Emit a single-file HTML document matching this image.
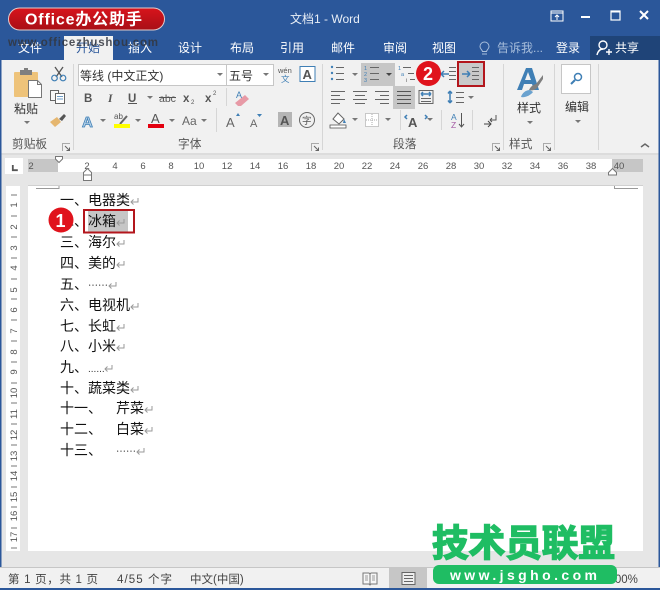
<!DOCTYPE html>
<html><head><meta charset="utf-8"><style>
html,body{margin:0;padding:0;background:#e6e6e6;width:660px;height:590px;overflow:hidden}
svg{display:block}
text{font-family:"Liberation Sans","Noto Sans CJK SC",sans-serif}
.t{font-size:12px;fill:#fff}
.g{font-size:11.7px;fill:#555}
.d{font-size:14px;fill:#111}
.cj{font-size:10px;fill:#444;font-family:"Noto Sans CJK SC",sans-serif}
.n{font-size:9.5px;fill:#555}
.ret{stroke:#999;stroke-width:1;fill:none}
.ic{stroke:#666;stroke-width:1;fill:none}
.bl{stroke:#3f7fb5;stroke-width:1.5;fill:none}
.sep{stroke:#d6d6d6;stroke-width:1}
</style></head><body>
<svg width="660" height="590" viewBox="0 0 660 590" xmlns="http://www.w3.org/2000/svg">
<defs>
<g id="rt"><path class="ret" d="M8 -7V-3H1M3.500 -5.500L1 -3L3.500 -0.500"/></g>
<g id="launch"><path d="M0.500 8V0.500H8" fill="none" stroke="#aaa"/><path d="M3 3L7.500 7.500M7.500 4.500V7.500H4.500" stroke="#666" fill="none"/></g>
<g id="ar"><path d="M0 0H6L3 3Z" fill="#777"/></g>
<linearGradient id="lg" x1="0" y1="0" x2="0" y2="1"><stop offset="0" stop-color="#d8141c"/><stop offset="1" stop-color="#a80f16"/></linearGradient>
</defs>
<!-- title -->
<rect width="660" height="60" fill="#2b579a"/>
<rect x="64" y="36" width="49" height="24" fill="#f1f1f1"/>
<rect x="590" y="36" width="70" height="24" fill="#1f4478"/>
<text x="290" y="23" font-size="12" fill="#e8eef6">文档1 - Word</text>
<rect x="8.500" y="8" width="156" height="22" rx="11" fill="url(#lg)" stroke="#e2cccc" stroke-width="1"/>
<text x="25" y="24.500" font-size="16" font-weight="bold" fill="#fff" textLength="117">Office办公助手</text>
<text x="18" y="52" class="t">文件</text>
<text x="128" y="52" class="t">插入</text>
<text x="178" y="52" class="t">设计</text>
<text x="230" y="52" class="t">布局</text>
<text x="280" y="52" class="t">引用</text>
<text x="331" y="52" class="t">邮件</text>
<text x="383" y="52" class="t">审阅</text>
<text x="432" y="52" class="t">视图</text>
<text x="497" y="52" class="t" style="fill:#a9bfdc">告诉我...</text>
<text x="556" y="52" class="t">登录</text>
<text x="615" y="52" class="t">共享</text>
<text x="76" y="52" font-size="12" fill="#2b579a">开始</text>
<text x="8" y="46" font-size="11.500" font-weight="bold" fill="#33373f" opacity=".85" textLength="150">www.officezhushou.com</text>
<!-- lightbulb -->
<path d="M482 54h5M482.500 51.500c-.5-2-2.500-2.500-2.500-5a4.500 4.500 0 0 1 9 0c0 2.500-2 3-2.500 5z" stroke="#a9bfdc" fill="none"/>
<!-- user -->
<circle cx="603" cy="45" r="4" fill="none" stroke="#fff" stroke-width="1.400"/><path d="M597 55c1-4 3-6 6-6M606 52h6M609 49v6" stroke="#fff" stroke-width="1.400" fill="none"/>
<!-- win controls -->
<rect x="551" y="11" width="12" height="10" fill="none" stroke="#fff"/><path d="M551 13h12M557 20v-5M555 17l2-2 2 2" stroke="#fff" fill="none"/>
<rect x="581" y="16" width="9" height="2" fill="#fff"/>
<rect x="611" y="11" width="9" height="9" fill="none" stroke="#fff" stroke-width="1.200"/><rect x="611" y="10.500" width="9" height="2" fill="#fff"/>
<path d="M640 11l8 8M648 11l-8 8" stroke="#fff" stroke-width="2"/>
<!-- ribbon -->
<rect x="0" y="60" width="660" height="93" fill="#f1f1f1"/>
<rect x="0" y="153" width="660" height="2" fill="#dcdcdc"/>
<path class="sep" d="M73.500 64V150M322.500 64V150M503.500 64V150M554.500 64V150M598.500 64V150M216.500 108V132M226.500 88V106M400.500 110V130M441.500 110V130M472.500 110V130"/>
<!-- paste -->
<rect x="14" y="72" width="24" height="25" rx="1" fill="#eec37a"/>
<rect x="20" y="70" width="12" height="5" fill="#7f7f7f"/><rect x="24" y="68" width="4" height="3" fill="#7f7f7f"/>
<path d="M28.500 80.500h9l4 4v13h-13z" fill="#fff" stroke="#777"/><path d="M37.500 80.500v4h4" fill="none" stroke="#777"/>
<text x="14" y="113" font-size="12" fill="#333">粘贴</text>
<use href="#ar" x="24" y="121"/>
<path d="M55 67l7 10M63 67l-7 10" stroke="#555" stroke-width="1.300"/><circle cx="54.500" cy="78" r="2.800" fill="none" stroke="#3f7fb5" stroke-width="1.200"/><circle cx="63" cy="78" r="2.800" fill="none" stroke="#3f7fb5" stroke-width="1.200"/>
<path d="M50.500 90.500h8v10h-8z" fill="#f8f8f8" stroke="#666"/><path d="M55.500 93.500h9v10h-9z" fill="#fff" stroke="#666"/><path d="M57 96.500h6M57 99h6" stroke="#3f7fb5" stroke-width=".8"/>
<path d="M50 122l7-5 4 5-6 5z" fill="#e5b66f"/><path d="M59 119l5-5 2 2-4 5z" fill="#555"/>
<text x="12" y="148" class="g">剪贴板</text>
<use href="#launch" x="62" y="143"/>
<!-- font -->
<rect x="78.500" y="64.500" width="148" height="21" fill="#fff" stroke="#c6c6c6"/>
<rect x="226.500" y="64.500" width="47" height="21" fill="#fff" stroke="#c6c6c6"/>
<text x="80" y="80" font-size="12" fill="#333">等线 (中文正文)</text>
<text x="229" y="80" font-size="12" fill="#333">五号</text>
<use href="#ar" x="217" y="73"/><use href="#ar" x="263" y="73"/>
<text x="278" y="73" font-size="7.500" fill="#555">wén</text><text x="281" y="82" font-size="8.500" fill="#3f7fb5">文</text>
<rect x="300" y="66.500" width="15" height="15" fill="#fff" stroke="#3f7fb5"/><text x="302.500" y="79" font-size="13" font-weight="bold" fill="#555">A</text>
<text x="84" y="102" font-size="11.500" font-weight="bold" fill="#555">B</text>
<text x="108" y="102" font-size="11.500" font-style="italic" style="font-family:'Liberation Serif',serif" fill="#555" font-weight="bold">I</text>
<text x="128" y="102" font-size="11.500" font-weight="bold" fill="#555">U</text><rect x="128" y="103" width="9" height="1" fill="#555"/>
<use href="#ar" x="147" y="96"/>
<text x="159" y="102" font-size="10.500" fill="#555">abc</text><rect x="159" y="97" width="17" height="1" fill="#555"/>
<text x="183" y="102" font-size="11.500" font-weight="bold" fill="#555">x</text><text x="191" y="104" font-size="6" fill="#555">2</text>
<text x="205" y="102" font-size="11.500" font-weight="bold" fill="#555">x</text><text x="213" y="95" font-size="6" fill="#555">2</text>
<path d="M235 103l10-8 4 4-8 7h-3z" fill="#e79aa6"/><text x="236" y="98" font-size="9" fill="#3f7fb5">A</text>
<text x="82" y="127" font-size="15" font-weight="bold" fill="#b7d3ea" stroke="#3f7fb5" stroke-width=".8">A</text>
<use href="#ar" x="100" y="119"/>
<text x="114" y="119" font-size="8" fill="#555">ab</text><path d="M120 124l7-8" stroke="#666" stroke-width="2"/><rect x="114" y="124" width="16" height="4" fill="#ffff00"/>
<use href="#ar" x="135" y="119"/>
<text x="151" y="123" font-size="13" fill="#555">A</text><rect x="148" y="124" width="16" height="4" fill="#e3000f"/>
<use href="#ar" x="169" y="119"/>
<text x="182" y="125" font-size="12" fill="#666">Aa</text>
<use href="#ar" x="201" y="119"/>
<text x="226" y="127" font-size="13" fill="#666">A</text><path d="M236 116h4l-2-3z" fill="#3f7fb5"/>
<text x="250" y="127" font-size="11" fill="#666">A</text><path d="M257 114h5l-2.500 3z" fill="#3f7fb5"/>
<rect x="278" y="112" width="14" height="15" fill="#b5b5b5"/><text x="280" y="125" font-size="13" font-weight="bold" fill="#555">A</text>
<circle cx="307" cy="120" r="7.500" fill="none" stroke="#666"/><text x="302" y="124" font-size="9.500" fill="#555">字</text>
<text x="178" y="148" class="g">字体</text>
<use href="#launch" x="311" y="143"/>
<!-- paragraph -->
<g fill="#3f7fb5"><circle cx="332" cy="67" r="1.200"/><circle cx="332" cy="73" r="1.200"/><circle cx="332" cy="79" r="1.200"/></g>
<path d="M336 67.500h8M336 73.500h8M336 79.500h8" class="ic"/><use href="#ar" x="352" y="73"/>
<rect x="361" y="63" width="34" height="23" fill="#c6c6c6"/>
<text x="364" y="70" font-size="5.500" fill="#3f7fb5">1</text><text x="364" y="76" font-size="5.500" fill="#3f7fb5">2</text><text x="364" y="82" font-size="5.500" fill="#3f7fb5">3</text>
<path d="M370 67.500h9M370 73.500h9M370 79.500h9" class="ic"/><path d="M386 73h6l-3 3z" fill="#444"/>
<text x="398" y="70" font-size="5.500" fill="#3f7fb5">1</text><text x="401" y="76" font-size="5.500" fill="#3f7fb5">a</text><text x="406" y="82" font-size="5.500" fill="#555">i</text>
<path d="M403 67.500h8M408 73.500h6M410 79.500h5" class="ic"/>
<path d="M441 74h8M441 74l3-3M441 74l3 3" class="bl"/><path d="M449 67.500h7M449 71.500h7M449 75.500h7M449 79.500h7" class="ic"/>
<rect x="458" y="62" width="26" height="24" fill="#c9c9c9" stroke="#b3161c" stroke-width="2"/>
<path d="M462 74h8M470 74l-3-3M470 74l-3 3" class="bl"/><path d="M472 67.500h7M472 71.500h7M472 75.500h7M472 79.500h7" class="ic"/>
<circle cx="428.500" cy="73.500" r="12.500" fill="#e0131c"/><text x="423" y="80" font-size="18" font-weight="bold" fill="#fff">2</text>
<path d="M331 91.500h14M331 95.500h9M331 99.500h14M331 103.500h9" class="ic"/>
<path d="M353 91.500h14M355 95.500h10M353 99.500h14M355 103.500h10" class="ic"/>
<path d="M375 91.500h14M380 95.500h9M375 99.500h14M380 103.500h9" class="ic"/>
<rect x="393" y="86" width="22" height="23" fill="#c6c6c6"/>
<path d="M397 91.500h14M397 95.500h14M397 99.500h14M397 103.500h14" stroke="#555" fill="none"/>
<path d="M419 90.500h14M419 103.500h14M419 90v14M433 90v14" class="ic"/><path d="M421 94h10M421 94l2-2M421 94l2 2M431 94l-2-2M431 94l-2 2" class="bl"/><path d="M421 98.500h10M421 101.500h10" class="ic"/>
<path d="M450 91v12M450 91l-2 2.500M450 91l2 2.500M450 103l-2-2.500M450 103l2-2.500" class="bl"/><path d="M456 92.500h8M456 97.500h8M456 102.500h8" class="ic"/><use href="#ar" x="468" y="96"/>
<path d="M333 119l5-6 6 6-5 5z" fill="#fff" stroke="#666"/><path d="M344 119l2 4h-3z" fill="#3f7fb5"/><rect x="330" y="125" width="16" height="3" fill="#fff" stroke="#555" stroke-width=".8"/>
<use href="#ar" x="352" y="118"/>
<rect x="365.500" y="113.500" width="13" height="13" fill="#fff" stroke="#999" stroke-dasharray="1 1"/><path d="M372 114v12M366 120h12" stroke="#aaa" stroke-dasharray="1 1"/>
<use href="#ar" x="385" y="118"/>
<text x="408" y="127" font-size="13" font-weight="bold" fill="#555">A</text><path d="M407 117l-2 2 2 2M425 117l2 2-2 2" class="bl" transform="translate(0,-2)"/>
<use href="#ar" x="427" y="118"/>
<text x="451" y="120" font-size="8.500" fill="#3f7fb5">A</text><text x="451" y="128" font-size="8.500" fill="#a55ca5">Z</text><path d="M461.500 113v14M459 124l2.500 3 2.500-3" stroke="#555" fill="none"/>
<path d="M490 120h6v-5M490 120l2-2M490 120l2 2" stroke="#555" fill="none"/><path d="M484 124h7M488 121l3 3-3 3" stroke="#444" fill="none"/>
<text x="393" y="148" class="g">段落</text>
<use href="#launch" x="492" y="143"/>
<!-- styles -->
<path d="M517 90l9-22h6l7 22h-5l-2-6h-8l-2 6z" fill="#3f7fb5"/><path d="M525 80h6l-3-8z" fill="#f1f1f1"/>
<path d="M529 90c2-4 4-5 7-6l7-9v4l-6 9c-2 2-5 3-8 2z" fill="#7f7f7f"/><path d="M521 97c1-4 5-7 9-7l3 2c-2 3-8 6-12 5z" fill="#6aa2cf"/>
<text x="517" y="112" font-size="12" fill="#333">样式</text>
<use href="#ar" x="527" y="121"/>
<text x="509" y="148" class="g">样式</text>
<use href="#launch" x="543" y="143"/>
<!-- edit -->
<rect x="561.500" y="64.500" width="29" height="29" fill="#fff" stroke="#c6c6c6"/>
<circle cx="578" cy="77" r="3.500" fill="none" stroke="#3f7fb5" stroke-width="1.500"/><path d="M575 80l-4 4" stroke="#3f7fb5" stroke-width="2"/>
<text x="565" y="111" font-size="12" fill="#333">编辑</text>
<use href="#ar" x="575" y="120"/>
<path d="M641 147l4-3 4 3" stroke="#666" stroke-width="1.500" fill="none"/>
<!-- window sides -->
<rect x="0" y="60" width="1.500" height="530" fill="#2b579a"/>
<rect x="658.500" y="60" width="1.500" height="530" fill="#2b579a"/>
<!-- horizontal ruler -->
<rect x="5" y="158" width="18" height="16" fill="#fff"/>
<path d="M12.800 165v5.200h5" stroke="#555" stroke-width="1.800" fill="none"/>
<rect x="28" y="159" width="30" height="13" fill="#c6c6c6"/>
<rect x="58" y="159" width="554" height="13" fill="#fff"/>
<rect x="612" y="159" width="31" height="13" fill="#c6c6c6"/>
<g text-anchor="middle">
<text x="31" y="169" class="n">2</text>
<text x="87" y="169" class="n">2</text>
<text x="115" y="169" class="n">4</text>
<text x="143" y="169" class="n">6</text>
<text x="171" y="169" class="n">8</text>
<text x="199" y="169" class="n">10</text>
<text x="227" y="169" class="n">12</text>
<text x="255" y="169" class="n">14</text>
<text x="283" y="169" class="n">16</text>
<text x="311" y="169" class="n">18</text>
<text x="339" y="169" class="n">20</text>
<text x="367" y="169" class="n">22</text>
<text x="395" y="169" class="n">24</text>
<text x="423" y="169" class="n">26</text>
<text x="451" y="169" class="n">28</text>
<text x="479" y="169" class="n">30</text>
<text x="507" y="169" class="n">32</text>
<text x="535" y="169" class="n">34</text>
<text x="563" y="169" class="n">36</text>
<text x="591" y="169" class="n">38</text>
<text x="619" y="169" class="n">40</text>
</g>
<path d="M55.500 156.500h7v2.500l-3.500 3.500-3.500-3.500z" fill="#fff" stroke="#777"/>
<path d="M87.500 168.500l4 4v2.500h-8v-2.500zM83.500 175h8v5.500h-8z" fill="#fff" stroke="#777"/>
<path d="M612.500 168.500l4 4v2.500h-8v-2.500z" fill="#fff" stroke="#777"/>
<!-- vertical ruler + doc -->
<rect x="6" y="186" width="14" height="365" fill="#fff"/>
<rect x="28" y="186" width="615" height="365" fill="#fff"/>
<rect x="28" y="185" width="615" height="1" fill="#d0d0d0"/>
<path d="M36 188.500h23M59 186v3M614 188.500h24M614.500 186v3" stroke="#999" fill="none"/>
<g font-size="9.500" fill="#555" text-anchor="middle">
<text transform="translate(17,205) rotate(-90)">1</text>
<text transform="translate(17,227) rotate(-90)">2</text>
<text transform="translate(17,248) rotate(-90)">3</text>
<text transform="translate(17,268) rotate(-90)">4</text>
<text transform="translate(17,290) rotate(-90)">5</text>
<text transform="translate(17,310) rotate(-90)">6</text>
<text transform="translate(17,331) rotate(-90)">7</text>
<text transform="translate(17,352) rotate(-90)">8</text>
<text transform="translate(17,372) rotate(-90)">9</text>
<text transform="translate(17,393) rotate(-90)">10</text>
<text transform="translate(17,414) rotate(-90)">11</text>
<text transform="translate(17,435) rotate(-90)">12</text>
<text transform="translate(17,456) rotate(-90)">13</text>
<text transform="translate(17,476) rotate(-90)">14</text>
<text transform="translate(17,497) rotate(-90)">15</text>
<text transform="translate(17,516) rotate(-90)">16</text>
<text transform="translate(17,537) rotate(-90)">17</text>
</g>
<path stroke="#777" d="M11 195h6M11 216h6M11 237h6M11 258h6M11 279h6M11 299h6M11 320h6M11 341h6M11 362h6M11 383h6M11 403h6M11 424h6M11 445h6M11 466h6M11 487h6M11 507h6M11 528h6M11 548h6"/>
<!-- doc text -->
<rect x="88" y="211" width="40" height="21" fill="#c6c6c6"/>
<text x="60" y="205" class="d">一、电器类</text>
<text x="60" y="226" class="d">二、冰箱</text>
<text x="60" y="247" class="d">三、海尔</text>
<text x="60" y="268" class="d">四、美的</text>
<text x="60" y="289" class="d">五、</text><text x="88" y="289" class="cj" lang="zh-CN">……</text>
<text x="60" y="310" class="d">六、电视机</text>
<text x="60" y="331" class="d">七、长虹</text>
<text x="60" y="351" class="d">八、小米</text>
<text x="60" y="372" class="d">九、</text><text x="88" y="372" font-size="10" fill="#333">......</text>
<text x="60" y="393" class="d">十、蔬菜类</text>
<text x="60" y="413" class="d">十一、</text><text x="116" y="413" class="d">芹菜</text>
<text x="60" y="434" class="d">十二、</text><text x="116" y="434" class="d">白菜</text>
<text x="60" y="455" class="d">十三、</text><text x="116" y="455" class="cj" lang="zh-CN">……</text>
<use href="#rt" x="130" y="205"/><use href="#rt" x="116" y="226"/><use href="#rt" x="116" y="247"/><use href="#rt" x="116" y="268"/><use href="#rt" x="108" y="289"/><use href="#rt" x="130" y="310"/><use href="#rt" x="116" y="331"/><use href="#rt" x="116" y="351"/><use href="#rt" x="104" y="372"/><use href="#rt" x="130" y="393"/><use href="#rt" x="144" y="413"/><use href="#rt" x="144" y="434"/><use href="#rt" x="136" y="455"/>
<rect x="84" y="210" width="50" height="22.500" fill="none" stroke="#b3161c" stroke-width="2"/>
<circle cx="61" cy="220" r="12.500" fill="#e0131c"/><text x="55.500" y="227" font-size="18" font-weight="bold" fill="#fff">1</text>
<!-- status -->
<rect x="0" y="567" width="660" height="21" fill="#f1f1f1"/>
<rect x="0" y="567" width="660" height="1" fill="#c6c6c6"/>
<rect x="0" y="588" width="660" height="2" fill="#2b579a"/>
<text x="8" y="583" font-size="11.500" fill="#444" textLength="90">第 1 页，共 1 页</text>
<text x="117" y="583" font-size="11.500" fill="#444" textLength="55">4/55 个字</text>
<text x="190" y="583" font-size="11.500" fill="#444">中文(中国)</text>
<path d="M363 573h6l1 1 1-1h6v11h-6l-1 1-1-1h-6z" fill="#f6f6f6" stroke="#777"/><path d="M370 574v10" stroke="#777"/><path d="M365 576h3M365 578h3M365 580h3M372 576h3M372 578h3M372 580h3" stroke="#999"/>
<rect x="389" y="568" width="38" height="20" fill="#c6c6c6"/>
<rect x="402" y="572.500" width="13" height="12" fill="#eee" stroke="#666"/><path d="M404 575.500h9M404 578.500h9M404 581.500h9" stroke="#666"/>
<text x="608.500" y="583" font-size="11.500" fill="#444">100%</text>
<!-- jsgho watermark -->
<text x="432" y="556" font-size="37" font-weight="bold" fill="#1fbd63" stroke="#1fbd63" stroke-width="1.500" textLength="183" lengthAdjust="spacingAndGlyphs">技术员联盟</text>
<rect x="433" y="565" width="184" height="19" rx="6" fill="#1fbd63"/>
<text x="450" y="580" font-size="14" font-weight="bold" fill="#fff" textLength="147">www.jsgho.com</text>
</svg>
</body></html>
